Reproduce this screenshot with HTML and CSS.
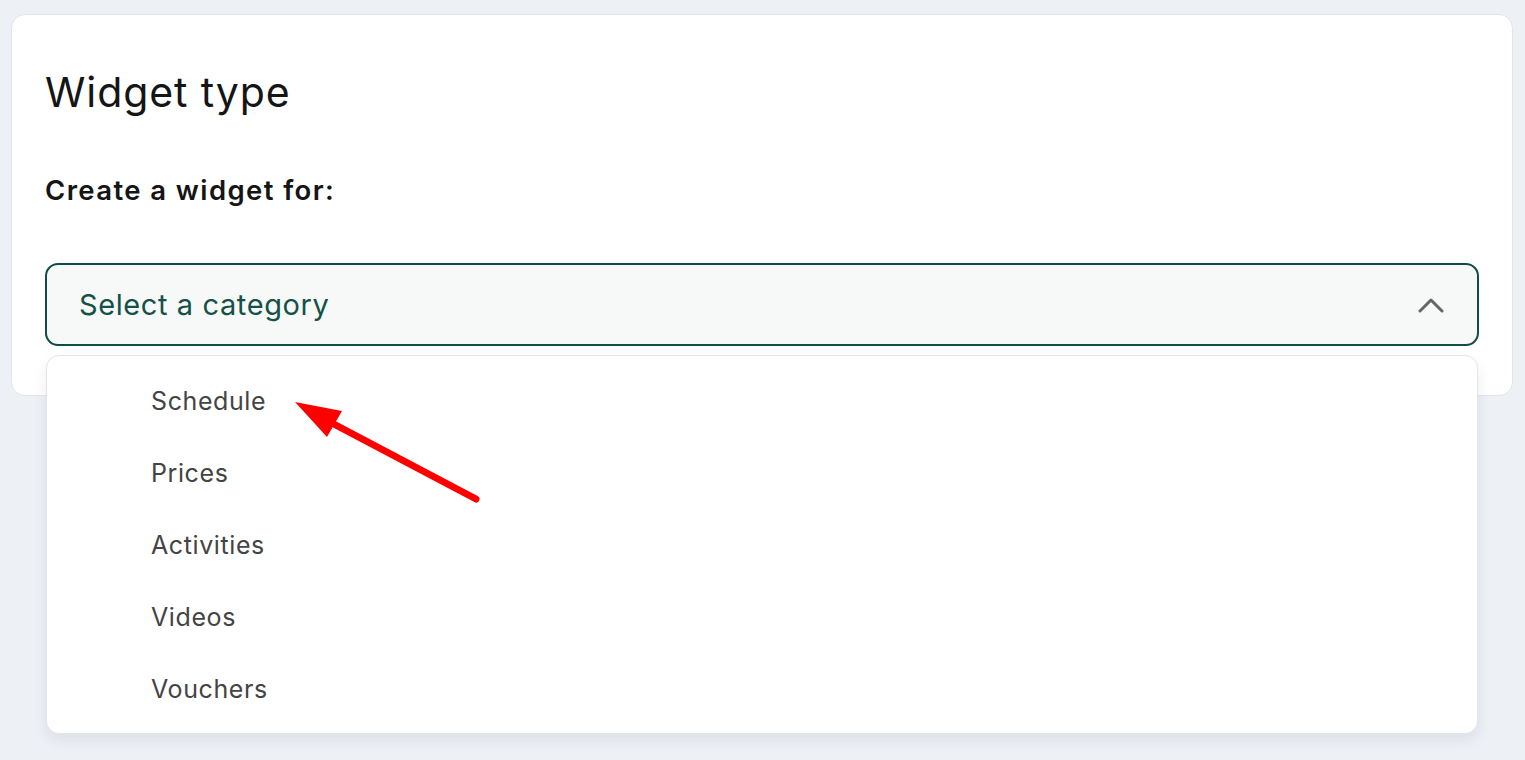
FILE: index.html
```html
<!doctype html>
<html>
<head>
  <title>Widget type</title>
  <link rel="stylesheet" href="styles.css">
</head>
<body>
  <div class="page">
    <section class="widget-card">
      <h1 class="widget-title">Widget type</h1>
      <p class="widget-label">Create a widget for:</p>
      <div class="select-wrap">
        <button class="select-box" type="button">
          <span class="select-text">Select a category</span>
          <svg class="select-chevron" width="26" height="16" viewBox="0 0 26 16">
            <path d="M2 14 L13 3 L24 14" fill="none" stroke="#666" stroke-width="3" stroke-linecap="round" stroke-linejoin="round"/>
          </svg>
        </button>
        <ul class="select-menu">
          <li class="select-option">Schedule</li>
          <li class="select-option">Prices</li>
          <li class="select-option">Activities</li>
          <li class="select-option">Videos</li>
          <li class="select-option">Vouchers</li>
        </ul>
      </div>
    </section>
  </div>
  <svg class="pointer-arrow" width="1525" height="760" viewBox="0 0 1525 760">
    <line x1="476" y1="499" x2="330" y2="422" stroke="#ff0000" stroke-width="7" stroke-linecap="round"/>
    <polygon points="295,402 342,411 327,437" fill="#ff0000"/>
  </svg>
</body>
</html>
```

FILE: styles.css
```css
html {
  height: 100%;
}
body {
  margin: 0;
  min-height: 100%;
  position: relative;
  background: #edf0f5;
  font-family: Inter, "Open Sans", sans-serif;
  color: #151515;
  -webkit-font-smoothing: antialiased;
}
body * {
  box-sizing: border-box;
}
.page {
  padding: 14px 12px 0 11px;
}
.widget-card {
  background: #fff;
  border: 1px solid #e1e4e9;
  border-radius: 14px;
  padding: 51px 33px 48px 33px;
  height: 382px;
}
.widget-title {
  margin: 0;
  font-size: 41px;
  font-weight: 400;
  line-height: 52px;
  letter-spacing: 0.9px;
}
.widget-label {
  margin: 54px 0 0;
  font-size: 27.5px;
  font-weight: 600;
  line-height: 36px;
  letter-spacing: 1.4px;
}
.select-wrap {
  position: relative;
  margin-top: 55px;
}
.select-box {
  width: 100%;
  height: 83px;
  display: flex;
  align-items: center;
  justify-content: space-between;
  padding: 0 33px 0 32px;
  background: #f7f9f8;
  border: 2px solid #0f4d45;
  border-radius: 13px;
  font: inherit;
  cursor: pointer;
}
.select-text {
  font-size: 29px;
  letter-spacing: 0.6px;
  color: #165148;
}
.select-chevron {
  display: block;
}
.select-menu {
  position: absolute;
  top: 92px;
  left: 1px;
  right: 1px;
  margin: 0;
  padding: 9px 0 8px;
  list-style: none;
  background: #fff;
  border: 1px solid #e4e5e9;
  border-radius: 13px;
  box-shadow: 0 6px 14px rgba(30, 40, 60, 0.08);
  z-index: 2;
}
.select-option {
  height: 72px;
  display: flex;
  align-items: center;
  padding-left: 104px;
  font-size: 25px;
  letter-spacing: 0.6px;
  color: #444;
}
.pointer-arrow {
  position: absolute;
  top: 0;
  left: 0;
  z-index: 5;
  pointer-events: none;
}
```
